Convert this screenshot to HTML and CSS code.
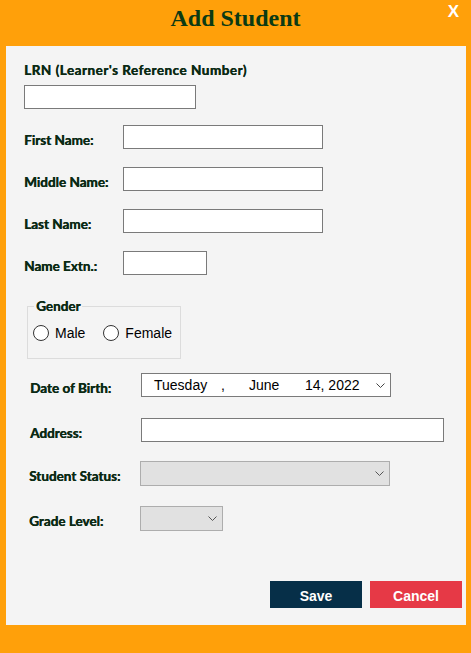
FILE: index.html
```html
<!DOCTYPE html>
<html>
<head>
<meta charset="utf-8">
<link rel="stylesheet" href="styles.css">
</head>
<body>
<div class="window">
  <div class="header">
    <span></span>
    <h1 class="title">Add Student</h1>
    <span class="close">X</span>
  </div>
  <div class="panel">
    <label class="lbl lrn-label">LRN (Learner's Reference Number)</label>
    <div class="input lrn-input"></div>

    <div class="names">
      <div class="row"><span class="lbl name-lbl">First Name:</span><div class="input wide"></div></div>
      <div class="row"><span class="lbl name-lbl">Middle Name:</span><div class="input wide"></div></div>
      <div class="row"><span class="lbl name-lbl">Last Name:</span><div class="input wide"></div></div>
      <div class="row"><span class="lbl name-lbl">Name Extn.:</span><div class="input short"></div></div>
    </div>

    <fieldset class="gender">
      <legend class="lbl">Gender</legend>
      <div class="radios">
        <span class="radio"></span><span class="radio-text">Male</span>
        <span class="radio second"></span><span class="radio-text">Female</span>
      </div>
    </fieldset>

    <div class="details">
      <div class="row dob-row">
        <span class="lbl det-lbl">Date of Birth:</span>
        <div class="input date">
          <span class="d-day">Tuesday</span>
          <span class="d-comma">,</span>
          <span class="d-month">June</span>
          <span class="d-year">14, 2022</span>
          <svg class="chev" width="9" height="5" viewBox="0 0 9 5"><polyline points="0.5,0.5 4.5,4.5 8.5,0.5" fill="none" stroke="#444" stroke-width="1"/></svg>
        </div>
      </div>
      <div class="row addr-row">
        <span class="lbl det-lbl">Address:</span>
        <div class="input address"></div>
      </div>
      <div class="row status-row shift">
        <span class="lbl det-lbl">Student Status:</span>
        <div class="select status">
          <svg class="chev" width="9" height="5" viewBox="0 0 9 5"><polyline points="0.5,0.5 4.5,4.5 8.5,0.5" fill="none" stroke="#555" stroke-width="1"/></svg>
        </div>
      </div>
      <div class="row grade-row shift">
        <span class="lbl det-lbl">Grade Level:</span>
        <div class="select grade">
          <svg class="chev" width="9" height="5" viewBox="0 0 9 5"><polyline points="0.5,0.5 4.5,4.5 8.5,0.5" fill="none" stroke="#555" stroke-width="1"/></svg>
        </div>
      </div>
    </div>

    <div class="actions">
      <button class="btn save">Save</button>
      <button class="btn cancel">Cancel</button>
    </div>
  </div>
</div>
</body>
</html>
```

FILE: styles.css
```css
* { box-sizing: border-box; }
html, body { margin: 0; padding: 0; }
body {
  width: 471px;
  height: 653px;
  background: #FFA00A;
  font-family: "Liberation Sans", Arial, sans-serif;
  overflow: hidden;
}
.window {
  width: 471px;
  height: 653px;
  background: #FFA00A;
}
.header {
  height: 46px;
  display: grid;
  grid-template-columns: 1fr auto 1fr;
  align-items: start;
}
.title {
  margin: 0;
  padding-top: 5px;
  font-family: "Liberation Serif", "Times New Roman", serif;
  font-weight: bold;
  font-size: 24px;
  line-height: 27px;
  color: #0b3a14;
}
.close {
  justify-self: end;
  margin-right: 12px;
  margin-top: 2px;
  font-family: "Liberation Sans", Arial, sans-serif;
  font-weight: bold;
  font-size: 17px;
  line-height: 20px;
  color: #ffffff;
}
.panel {
  margin-left: 6px;
  width: 460px;
  height: 579px;
  background: #F4F4F4;
  padding: 16px 0 0 18px;
}
.lbl {
  font-family: Lato, "Open Sans", sans-serif;
  font-weight: 700;
  font-size: 13.5px;
  line-height: 16px;
  color: #0b2a14;
  white-space: nowrap;
  text-shadow: 0.4px 0 0 #0b2a14;
}
.lrn-label { display: block; letter-spacing: 0.5px; }
.input {
  background: #ffffff;
  border: 1px solid #7a7a7a;
  height: 24px;
}
.lrn-input {
  width: 172px;
  margin-top: 7px;
}
.names { display: flex; flex-direction: column; gap: 18px; margin-top: 16px; }
.row { display: flex; align-items: center; height: 24px; }
.name-lbl { width: 99px; margin-top: 5px; }
.wide { width: 200px; }
.short { width: 84px; }

.gender {
  margin: 24px 0 0 3px;
  width: 154px;
  height: 60px;
  border: 1px solid #dcdcdc;
  padding: 0 0 0 5px;
}
.gender legend {
  margin-left: 1px;
  padding: 0 2px;
  line-height: 14px;
}
.radios {
  display: flex;
  align-items: center;
  margin-top: 12px;
  height: 16px;
}
.radio {
  width: 16px;
  height: 16px;
  border: 1px solid #333;
  border-radius: 50%;
  background: #fff;
  flex: none;
}
.radio.second { margin-left: 18px; }
.radio-text {
  margin-left: 6px;
  font-size: 14px;
  color: #000;
  line-height: 16px;
}

.details { padding-left: 6px; margin-top: 14px; }
.det-lbl { width: 111px; margin-top: 5px; }
.shift { margin-left: -1px; }
.addr-row { margin-top: 21px; }
.status-row { margin-top: 19px; }
.grade-row { margin-top: 21px; }

.date {
  width: 250px;
  position: relative;
  font-size: 14px;
  color: #000;
}
.d-day { position: absolute; left: 12px; top: 3px; }
.d-comma { position: absolute; left: 79px; top: 3px; }
.d-month { position: absolute; left: 107px; top: 3px; }
.d-year { position: absolute; left: 163px; top: 3px; }
.date .chev { position: absolute; left: 234px; top: 9px; }
.address { width: 303px; }

.select {
  background: #e1e1e1;
  border: 1px solid #adadad;
  height: 25px;
  display: flex;
  align-items: center;
  justify-content: flex-end;
}
.select .chev { margin-right: 5px; }
.status { width: 250px; }
.grade { width: 83px; }

.actions {
  display: flex;
  justify-content: flex-end;
  gap: 8px;
  padding-right: 4px;
  margin-top: 51px;
}
.btn {
  width: 92px;
  height: 27px;
  border: none;
  color: #fff;
  font-family: "Liberation Sans", Arial, sans-serif;
  font-weight: bold;
  font-size: 14px;
  padding: 2px 0 0 0;
}
.save { background: #062f48; }
.cancel { background: #e63946; }
```
